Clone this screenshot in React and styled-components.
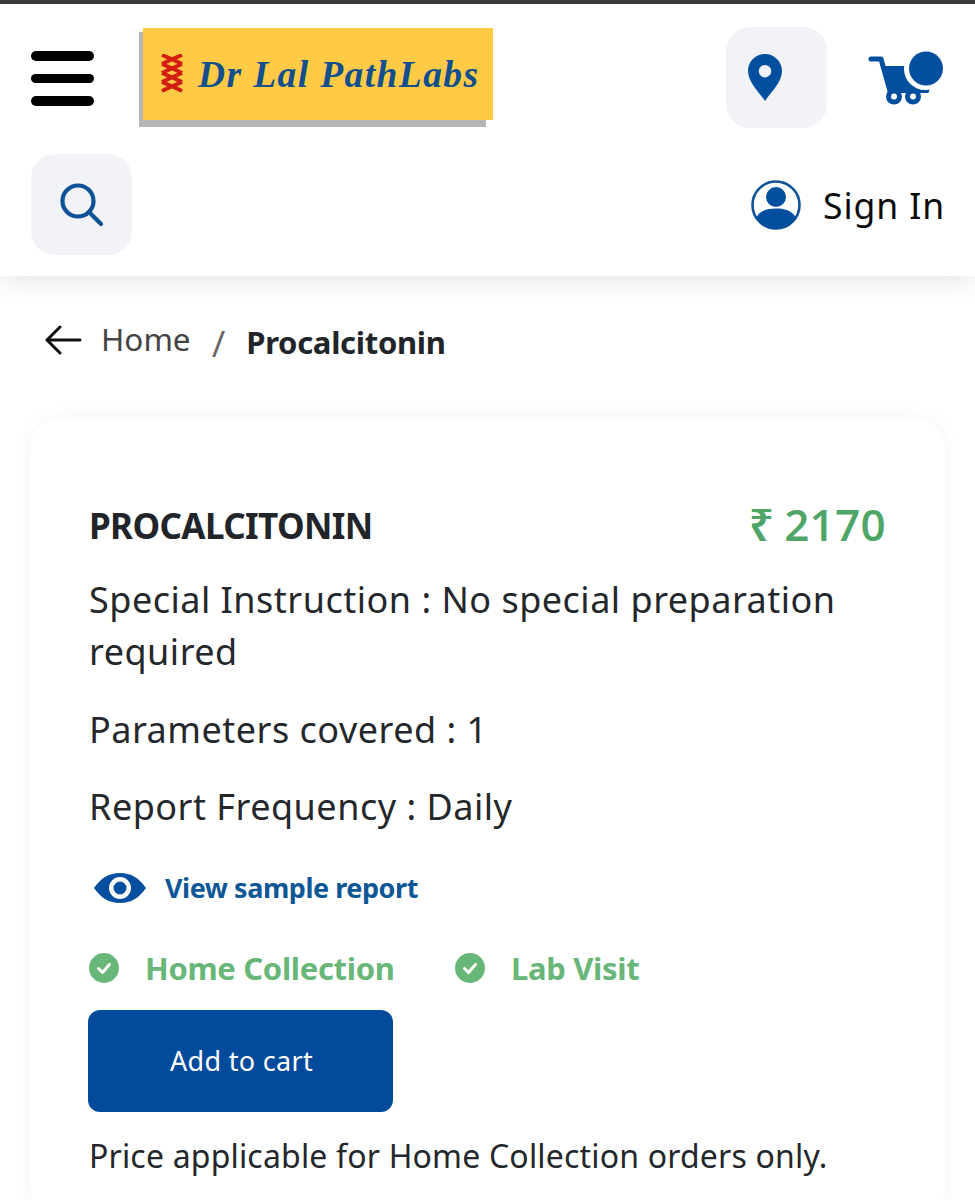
import React from "react";
import styled, { createGlobalStyle } from "styled-components";

const Global = createGlobalStyle`
  html, body { margin: 0; padding: 0; background: #fff; }
  body { font-family: "Open Sans", "Noto Sans", sans-serif; color: #212529; }
  * { box-sizing: border-box; }
`;

const Page = styled.div`
  width: 975px;
  height: 1200px;
  overflow: hidden;
  background: #fff;
`;
const StatusEdge = styled.div`
  height: 4px;
  background: #3b3c40;
`;
const Header = styled.header`
  height: 272px;
  background: #fff;
  box-shadow: 0 5px 24px rgba(0, 0, 0, 0.1);
  padding: 23px 31px 0 31px;
  display: flex;
  flex-direction: column;
`;
const Row = styled.div`
  display: flex;
  align-items: center;
  justify-content: space-between;
`;
const LeftGroup = styled.div`
  display: flex;
  align-items: flex-start;
  align-self: flex-start;
  gap: 49px;
`;
const RightGroup = styled.div`
  display: flex;
  align-items: center;
  gap: 41px;
`;
const Burger = styled.div`
  width: 63px;
  display: flex;
  flex-direction: column;
  gap: 13px;
  margin-top: 24px;
`;
const BurgerBar = styled.span`
  height: 9.5px;
  border-radius: 5px;
  background: #000;
`;
const LogoFrame = styled.div`
  position: relative;
  margin-top: 1px;
  &::before {
    content: "";
    position: absolute;
    left: -4px;
    right: 7px;
    top: 4px;
    bottom: -7px;
    background: #b5b5b3;
  }
`;
const Logo = styled.div`
  position: relative;
  width: 350px;
  height: 92px;
  background: #ffcb47;
  display: flex;
  align-items: center;
  padding-left: 16px;
  gap: 13px;
`;
const LogoText = styled.span`
  font-family: "Liberation Serif", serif;
  font-style: italic;
  font-weight: 700;
  font-size: 37.5px;
  letter-spacing: 1.4px;
  color: #124f8c;
  white-space: nowrap;
`;
const IconTile = styled.div`
  width: 101px;
  height: 101px;
  border-radius: 24px;
  background: #f1f3f6;
  display: flex;
  align-items: center;
  justify-content: ${(p) => (p.$start ? "flex-start" : "center")};
  padding-left: ${(p) => (p.$start ? "22px" : "0")};
`;
const SecondRow = styled(Row)`
  margin-top: 26px;
`;
const SignIn = styled.div`
  display: flex;
  align-items: center;
  gap: 22px;
  margin-right: -1px;
  font-family: "Noto Sans", sans-serif;
  font-size: 35.5px;
  letter-spacing: 0.9px;
  color: #0b0b0b;
`;
const Crumbs = styled.nav`
  display: flex;
  align-items: flex-start;
  padding: 41px 0 0 45px;
  height: 142px;
`;
const BackIcon = styled.svg`
  margin-top: 8px;
  margin-right: 19px;
`;
const CrumbHome = styled.span`
  font-family: "Noto Sans", sans-serif;
  font-size: 31.5px;
  color: #444;
  line-height: 44px;
`;
const Slash = styled.span`
  font-size: 37px;
  font-weight: 500;
  color: #666;
  margin: 4px 0 0 21px;
  line-height: 44px;
`;
const CrumbCurrent = styled.strong`
  font-family: "Noto Sans", sans-serif;
  font-size: 31px;
  font-weight: 700;
  letter-spacing: -0.3px;
  color: #212529;
  margin: 3px 0 0 21px;
  line-height: 44px;
`;
const Card = styled.section`
  margin: 0 30px;
  height: 800px;
  border-radius: 30px;
  background: #fff;
  box-shadow: 0 0 20px rgba(0, 0, 0, 0.045);
  padding: 80px 59px 0 59px;
`;
const TitleRow = styled(Row)`
  height: 54px;
`;
const Title = styled.h1`
  margin: 0;
  font-family: "Noto Sans", sans-serif;
  font-size: 35px;
  font-weight: 700;
  letter-spacing: -0.62px;
  color: #212529;
`;
const Price = styled.div`
  font-size: 44px;
  font-weight: 600;
  color: #4fa568;
  display: flex;
  align-items: center;
  gap: 10px;
  letter-spacing: 0.3px;
  margin-top: -2px;
`;
const Info = styled.p`
  margin: ${(p) => p.$mt || 0}px 0 0;
  font-family: "Noto Sans", sans-serif;
  font-size: 36px;
  line-height: 52px;
  letter-spacing: 0.5px;
  color: #24272b;
`;
const SampleLink = styled.a`
  display: flex;
  align-items: center;
  gap: 19px;
  margin: 35px 0 0 5px;
  font-family: "Noto Sans", sans-serif;
  font-size: 27px;
  font-weight: 700;
  letter-spacing: -0.45px;
  color: #0d5796;
  line-height: 40px;
`;
const Modes = styled.div`
  display: flex;
  margin-top: 40px;
`;
const Mode = styled.div`
  width: 366px;
  display: flex;
  align-items: center;
  gap: 26px;
  font-family: "Noto Sans", sans-serif;
  font-size: 31px;
  font-weight: 700;
  letter-spacing: -0.32px;
  color: #68b678;
  line-height: 40px;
`;
const AddButton = styled.button`
  display: block;
  width: 305px;
  height: 102px;
  margin: 22px 0 0 -1px;
  border: 0;
  border-radius: 12px;
  background: #024a9c;
  color: #fff;
  font-family: "Noto Sans", sans-serif;
  font-size: 27px;
  letter-spacing: 0.3px;
  padding: 0 0 2px 2px;
`;
const Note = styled(Info)`
  font-size: 32px;
  letter-spacing: 0.18px;
  margin-top: 18px;
`;

const Blue = "#024f9f";

const Dna = () => (
  <svg width="26" height="40" viewBox="0 0 26 40" fill="none" stroke="#d21f12" strokeWidth="4">
    <path d="M3 1c14 6 18 8 20 9M23 1C9 7 5 9 3 10M3 10c14 6 18 8 20 9M23 10C9 16 5 18 3 19M3 19c14 6 18 8 20 9M23 19C9 25 5 27 3 28M3 28c14 6 18 8 20 9M23 28C9 34 5 36 3 37" />
  </svg>
);
const Pin = () => (
  <svg width="34" height="47" viewBox="0 0 34 47">
    <path fill={Blue} fillRule="evenodd" d="M17 0C7.6 0 0 7.6 0 17c0 11 11 21 17 30 6-9 17-19 17-30C34 7.600 26.400 0 17 0Zm0 11a6.200 6.200 0 1 1 0 12.400A6.200 6.200 0 0 1 17 11Z" />
  </svg>
);
const Cart = () => (
  <svg width="76" height="54" viewBox="0 0 76 54">
    <path fill="none" stroke={Blue} strokeWidth="5" strokeLinecap="round" strokeLinejoin="round" d="M3 8h10l9 32" />
    <path fill={Blue} d="M14 15h36c.5 8 5 13 13 16l-2 9.500c0 .8-.7 1.500-1.500 1.500H21Z" />
    <circle cx="26" cy="45.500" r="5.500" fill="#fff" stroke={Blue} strokeWidth="5" />
    <circle cx="45" cy="45.500" r="5.500" fill="#fff" stroke={Blue} strokeWidth="5" />
    <circle cx="57" cy="18" r="21" fill="#fff" />
    <circle cx="58" cy="17.500" r="17" fill={Blue} />
  </svg>
);
const Search = () => (
  <svg width="44" height="44" viewBox="0 0 44 44" fill="none" stroke="#0d5196" strokeWidth="4.200" strokeLinecap="round">
    <circle cx="18" cy="18" r="15.500" />
    <path d="M29 29l12 12" />
  </svg>
);
const User = () => (
  <svg width="50" height="50" viewBox="0 0 50 50">
    <circle cx="25" cy="25" r="23.500" fill="#fff" stroke="#0d5196" strokeWidth="2.600" />
    <circle cx="25" cy="17" r="10" fill={Blue} />
    <path fill={Blue} d="M5 38c4-8 12-9.500 20-9.500S41 30 45 38c-4 6-11.500 11-20 11S9 44 5 38Z" />
  </svg>
);
const Back = () => (
  <BackIcon width="37" height="30" viewBox="0 0 37 30" fill="none" stroke="#111" strokeWidth="3" strokeLinecap="round" strokeLinejoin="round">
    <path d="M35 15H2M15 2 2 15l13 13" />
  </BackIcon>
);
const Eye = () => (
  <svg width="52" height="32" viewBox="0 0 52 32">
    <path fill={Blue} fillRule="evenodd" d="M0 16C7 6 15 1 26 1s19 5 26 15c-7 10-15 15-26 15S7 26 0 16Zm26-11a11 11 0 1 0 0 22 11 11 0 0 0 0-22Z" />
    <circle cx="26" cy="16" r="6.500" fill={Blue} />
  </svg>
);
const Check = () => (
  <svg width="30" height="30" viewBox="0 0 30 30">
    <circle cx="15" cy="15" r="15" fill="#68b678" />
    <path d="M9.500 15.500l4 4 7-8" fill="none" stroke="#fff" strokeWidth="3" strokeLinecap="round" strokeLinejoin="round" />
  </svg>
);

export default function App() {
  return (
    <Page>
      <Global />
      <StatusEdge />
      <Header>
        <Row>
          <LeftGroup>
            <Burger>
              <BurgerBar />
              <BurgerBar />
              <BurgerBar />
            </Burger>
            <LogoFrame>
              <Logo>
                <Dna />
                <LogoText>Dr Lal PathLabs</LogoText>
              </Logo>
            </LogoFrame>
          </LeftGroup>
          <RightGroup>
            <IconTile $start>
              <Pin />
            </IconTile>
            <Cart />
          </RightGroup>
        </Row>
        <SecondRow>
          <IconTile>
            <Search />
          </IconTile>
          <SignIn>
            <User />
            Sign In
          </SignIn>
        </SecondRow>
      </Header>
      <Crumbs>
        <Back />
        <CrumbHome>Home</CrumbHome>
        <Slash>/</Slash>
        <CrumbCurrent>Procalcitonin</CrumbCurrent>
      </Crumbs>
      <Card>
        <TitleRow>
          <Title>PROCALCITONIN</Title>
          <Price>
            <span>₹</span>
            <span>2170</span>
          </Price>
        </TitleRow>
        <Info $mt={22}>
          Special Instruction : No special preparation
          <br />
          required
        </Info>
        <Info $mt={26}>Parameters covered : 1</Info>
        <Info $mt={25}>Report Frequency : Daily</Info>
        <SampleLink>
          <Eye />
          View sample report
        </SampleLink>
        <Modes>
          <Mode>
            <Check />
            Home Collection
          </Mode>
          <Mode>
            <Check />
            Lab Visit
          </Mode>
        </Modes>
        <AddButton>Add to cart</AddButton>
        <Note>Price applicable for Home Collection orders only.</Note>
      </Card>
    </Page>
  );
}
